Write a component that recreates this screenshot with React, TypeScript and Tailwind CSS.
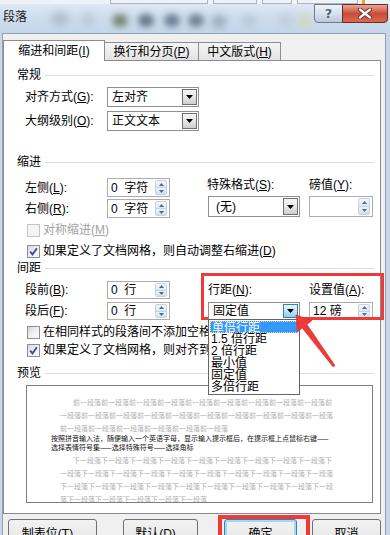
import clsx from 'clsx'
import type { ReactNode } from 'react'

const UI_FONT = "font-['Liberation_Sans','Noto_Sans_CJK_SC',sans-serif]"

// preview paragraph lines (gray = neighbouring paragraphs)
const PREV = ['前一段落'.repeat(9) + '前', '一段落前'.repeat(9) + '一段落', '前一段落'.repeat(6)]
const NEXT = ['下一段落'.repeat(9) + '下', '一段落下'.repeat(9) + '一段落', '下一段落'.repeat(9) + '下一段', '落' + '下一段落'.repeat(5)]

const LINE_OPTIONS = ['单倍行距', '1.5 倍行距', '2 倍行距', '最小值', '固定值', '多倍行距']

function Mn({ k }: { k: string }) {
  return (
    <>
      (<span className="underline underline-offset-1">{k}</span>)
    </>
  )
}

function Section({ title, className }: { title: string; className?: string }) {
  return (
    <div className={clsx('flex h-[16px] items-center pl-[13px] pr-[6px]', className)}>
      <span className="leading-[16px]">{title}</span>
      <div className="ml-[4px] h-px flex-1 bg-[#d5dfe5]" />
    </div>
  )
}

function SpinBox({ value, className }: { value: string; className: string }) {
  return (
    <div className={clsx('flex border border-[#abadb3] bg-white', className)}>
      <span className="flex-1 self-center whitespace-pre pl-[3px] leading-[12px]">{value}</span>
      <div className="my-px mr-[2px] flex w-[12px] flex-col">
        <div className="flex flex-1 items-center justify-center rounded-t-[2px] border border-[#c5d2df] bg-gradient-to-b from-[#f5f8fb] to-[#dde7f1]">
          <svg width="5" height="3" viewBox="0 0 5 3">
            <path d="M0 3L2.5 0L5 3Z" fill="#4f6a8f" />
          </svg>
        </div>
        <div className="-mt-px flex flex-1 items-center justify-center rounded-b-[2px] border border-[#c5d2df] bg-gradient-to-b from-[#eef3f8] to-[#d4e0ec]">
          <svg width="5" height="3" viewBox="0 0 5 3">
            <path d="M0 0L2.5 3L5 0Z" fill="#4f6a8f" />
          </svg>
        </div>
      </div>
    </div>
  )
}

function Combo({
  value,
  className,
  hot,
  pad = 'pl-[3px]',
  children,
}: {
  value: string
  className: string
  hot?: boolean
  pad?: string
  children?: ReactNode
}) {
  return (
    <div className={clsx('relative flex border border-[#8e8f8f] bg-white p-px', className)}>
      <span className={clsx('flex-1 self-center leading-[12px]', pad)}>{value}</span>
      <div
        className={clsx(
          'flex w-[15px] items-center justify-center border',
          hot
            ? 'border-[#3c7fb1] bg-gradient-to-b from-[#eaf6fd] via-[#bee6fd] to-[#8fcbf0]'
            : 'border-[#707070] bg-gradient-to-b from-[#f4f4f4] via-[#e8e8e8] to-[#cdcdcd]',
        )}
      >
        <svg width="7" height="4" viewBox="0 0 7 4">
          <path d="M0 0H7L3.5 4Z" fill="#000" />
        </svg>
      </div>
      {children}
    </div>
  )
}

function Check({
  checked,
  disabled,
  children,
  className,
}: {
  checked?: boolean
  disabled?: boolean
  children: ReactNode
  className?: string
}) {
  return (
    <div className={clsx('flex h-[14px] items-center pl-[23px]', className)}>
      <div
        className={clsx(
          'flex h-[13px] w-[13px] shrink-0 items-center justify-center border',
          disabled
            ? 'border-[#c5c5c5] bg-[#f4f4f4]'
            : 'border-[#8e8f8f] bg-gradient-to-br from-[#d6d6d6] via-[#f0f0f0] to-[#fbfbfb]',
        )}
      >
        {checked && (
          <svg width="9" height="9" viewBox="0 0 9 9">
            <path d="M1.2 4.6L3.5 7.4L7.9 1.2" stroke="#3550a0" strokeWidth="1.9" fill="none" />
          </svg>
        )}
      </div>
      <span className={clsx('ml-[3px] whitespace-nowrap leading-[14px]', disabled && 'text-[#a3a3a3]')}>
        {children}
      </span>
    </div>
  )
}

function Btn({ label, className }: { label: ReactNode; className: string }) {
  return (
    <div
      className={clsx(
        'flex h-[30px] justify-center rounded-[3px] border bg-gradient-to-b from-[#f2f2f2] via-[#ebebeb] to-[#d4d4d4] pt-[7px]',
        className,
      )}
    >
      <span className="leading-[14px]">{label}</span>
    </div>
  )
}

export default function App() {
  return (
    <div className={clsx('relative h-[535px] w-[390px] overflow-hidden bg-[#c6d7ea] text-[12px] text-black', UI_FONT)}>
      {/* ── title bar ─────────────────────────────────────────────────────── */}
      <div className="relative h-[33px] bg-gradient-to-b from-[#e3ecf6] via-[#cfdeee] to-[#c4d6ea]">
        {/* blurred window behind the glass */}
        <div className="pointer-events-none absolute inset-0 overflow-hidden">
          <div className="absolute left-[52px] top-[13px] h-[12px] w-[16px] rounded-full bg-[#a9b7c6] blur-[4px]" />
          <div className="absolute left-[82px] top-[15px] h-[10px] w-[12px] rounded-full bg-[#b3c0cd] blur-[4px]" />
          <div className="absolute left-[112px] top-[14px] h-[13px] w-[16px] rounded-full bg-[#7d8a78] blur-[3px]" />
          <div className="absolute left-[138px] top-[14px] h-[13px] w-[16px] rounded-full bg-[#6a7c90] blur-[3px]" />
          <div className="absolute left-[164px] top-[14px] h-[13px] w-[16px] rounded-full bg-[#6e8298] blur-[3px]" />
          <div className="absolute left-[188px] top-[14px] h-[13px] w-[16px] rounded-full bg-[#72859a] blur-[3px]" />
          <div className="absolute left-[212px] top-[16px] h-[11px] w-[14px] rounded-full bg-[#8ea2b8] blur-[4px]" />
          <div className="absolute left-[242px] top-[16px] h-[10px] w-[14px] rounded-full bg-[#b4c3d3] blur-[4px]" />
          <div className="absolute left-[278px] top-[15px] h-[10px] w-[16px] rounded-full bg-[#bccada] blur-[4px]" />
          <div className="absolute left-[300px] top-[15px] h-[12px] w-[10px] rounded-full bg-[#d8d3a8] blur-[4px]" />
        </div>

        <div className="relative flex h-[4px] bg-[#eef3f9]">
          <div className="ml-[110px] w-[98px] border-x border-b border-[#aab4c0]" />
          <div className="ml-[5px] w-[44px] border-x border-b border-[#aab4c0]" />
          <div className="ml-[5px] w-[30px] border-x border-b border-[#aab4c0]" />
          <div className="ml-[5px] w-[61px] border-x border-b border-[#aab4c0]" />
          <div className="ml-[4px] w-[3px] bg-[#f0a030]" />
        </div>

        <div className="relative flex items-start justify-between">
          <span className="ml-[3px] mt-[6px] leading-[14px] text-[#1b1b1b]">段落</span>
          <div className="mr-[2px] flex">
            <div className="flex h-[19px] w-[29px] items-center justify-center rounded-bl-[4px] border border-[#6e7b8a] bg-gradient-to-b from-[#eef3f8] via-[#d6e1ec] to-[#b9cadc]">
              <span className="font-['DejaVu_Sans',sans-serif] text-[13px] font-bold leading-none text-[#55606d] [text-shadow:0_0_2px_#fff]">?</span>
            </div>
            <div className="-ml-px flex h-[19px] w-[46px] items-center justify-center rounded-br-[4px] border border-[#6a2b22] bg-gradient-to-b from-[#e9a898] via-[#c84c39] to-[#d9694f]">
              <svg width="14" height="11" viewBox="0 0 14 11">
                <path d="M2 1.5L12 9.5M12 1.5L2 9.5" stroke="#5a1e16" strokeWidth="4" strokeLinecap="round" />
                <path d="M2 1.5L12 9.5M12 1.5L2 9.5" stroke="#fff" strokeWidth="2.4" strokeLinecap="round" />
              </svg>
            </div>
          </div>
        </div>
      </div>

      {/* ── dialog body ───────────────────────────────────────────────────── */}
      <div className="ml-[2px] h-[520px] w-[384px] border-x border-t border-[#95a1ae] bg-[#f0f0f0] pt-[6px]">
        {/* tabs */}
        <div className="flex h-[20px] items-end">
          <div className="relative z-10 -mb-px flex h-[21px] w-[102px] items-center justify-center border-x border-t border-[#898c95] bg-white">
            <span className="leading-[14px]">
              缩进和间距<Mn k="I" />
            </span>
          </div>
          <div className="-ml-px flex h-[18px] w-[95px] items-center justify-center border-x border-t border-[#898c95] bg-gradient-to-b from-[#f6f6f6] to-[#e3e3e3]">
            <span className="leading-[14px]">
              换行和分页<Mn k="P" />
            </span>
          </div>
          <div className="-ml-px flex h-[18px] w-[83px] items-center justify-center border-x border-t border-[#898c95] bg-gradient-to-b from-[#f6f6f6] to-[#e3e3e3]">
            <span className="leading-[14px]">
              中文版式<Mn k="H" />
            </span>
          </div>
        </div>

        {/* tab panel */}
        <div className="h-[454px] w-[378px] border border-[#898c95] bg-white">
          <Section title="常规" className="mt-[6px]" />
          <div className="mt-[4px] flex h-[20px] items-center pl-[21px]">
            <span className="w-[82px] leading-[14px]">
              对齐方式<Mn k="G" />:
            </span>
            <Combo value="左对齐" className="h-[20px] w-[92px]" />
          </div>
          <div className="mt-[4px] flex h-[20px] items-center pl-[21px]">
            <span className="w-[82px] leading-[14px]">
              大纲级别<Mn k="O" />:
            </span>
            <Combo value="正文文本" className="h-[20px] w-[92px]" />
          </div>

          <Section title="缩进" className="mt-[23px]" />
          <div className="mt-[8px] flex pl-[21px]">
            <div className="w-[182px]">
              <div className="flex h-[19px] items-center">
                <span className="w-[82px] leading-[14px]">
                  左侧<Mn k="L" />:
                </span>
                <SpinBox value="0  字符" className="h-[19px] w-[63px]" />
              </div>
              <div className="mt-[2px] flex h-[19px] items-center">
                <span className="w-[82px] leading-[14px]">
                  右侧<Mn k="R" />:
                </span>
                <SpinBox value="0  字符" className="h-[19px] w-[63px]" />
              </div>
            </div>
            <div>
              <div className="flex h-[14px] items-center">
                <span className="w-[102px] leading-[14px]">
                  特殊格式<Mn k="S" />:
                </span>
                <span className="leading-[14px]">
                  磅值<Mn k="Y" />:
                </span>
              </div>
              <div className="mt-[4px] flex">
                <Combo value="(无)" pad="pl-[6px]" className="ml-px h-[21px] w-[92px]" />
                <SpinBox value="" className="ml-[9px] h-[21px] w-[64px]" />
              </div>
            </div>
          </div>

          <Check disabled className="mt-[5px]">
            对称缩进<Mn k="M" />
          </Check>
          <Check checked className="mt-[7px]">
            如果定义了文档网格，则自动调整右缩进<Mn k="D" />
          </Check>

          <Section title="间距" className="mt-[2px]" />
          <div className="mt-[5px] flex pl-[21px]">
            <div className="w-[182px]">
              <div className="flex h-[18px] items-center">
                <span className="w-[82px] leading-[14px]">
                  段前<Mn k="B" />:
                </span>
                <SpinBox value="0  行" className="h-[18px] w-[63px]" />
              </div>
              <div className="mt-[3px] flex h-[18px] items-center">
                <span className="w-[82px] leading-[14px]">
                  段后<Mn k="F" />:
                </span>
                <SpinBox value="0  行" className="h-[18px] w-[63px]" />
              </div>
            </div>
            <div>
              <div className="flex h-[18px] items-center">
                <span className="ml-px w-[101px] leading-[14px]">
                  行距<Mn k="N" />:
                </span>
                <span className="leading-[14px]">
                  设置值<Mn k="A" />:
                </span>
              </div>
              <div className="mt-[3px] flex">
                <Combo value="固定值" hot className="relative z-20 ml-px h-[18px] w-[92px]">
                  {/* open list */}
                  <div className="absolute -left-px top-full w-[92px] border border-[#646464] bg-white p-px">
                    {LINE_OPTIONS.map((o, i) => (
                      <div
                        key={o}
                        className={clsx(
                          'h-[12px] whitespace-pre pl-px leading-[12px]',
                          i === 0 && 'border border-dotted border-[#f7d48a] bg-[#3399ff] text-white',
                        )}
                      >
                        {o}
                      </div>
                    ))}
                  </div>
                </Combo>
                <SpinBox value="12 磅" className="ml-[9px] h-[18px] w-[64px]" />
              </div>
            </div>
          </div>

          <Check className="mt-[5px]">
            在相同样式的段落间不添加空格<Mn k="C" />
          </Check>
          <Check checked className="mt-[4px]">
            如果定义了文档网格，则对齐到网格<Mn k="W" />
          </Check>

          <Section title="预览" className="mt-[8px]" />
          <div className="ml-[22px] mt-[4px] h-[118px] w-[347px] overflow-hidden border border-[#7f7f7f] bg-white pt-[10px] font-['Noto_Sans_CJK_SC',sans-serif] text-[7px]">
            <div className="whitespace-nowrap pl-[46px] leading-[13px] text-[#b0b0b0]">{PREV[0]}</div>
            <div className="whitespace-nowrap pl-[33px] leading-[13px] text-[#b0b0b0]">{PREV[1]}</div>
            <div className="whitespace-nowrap pl-[33px] leading-[13px] text-[#b0b0b0]">{PREV[2]}</div>
            <div className="-mt-px whitespace-nowrap pl-[24px] leading-[9px] text-[#111]">
              按照拼音输入法，随便输入一个英语字母，显示输入提示框后，在提示框上点鼠标右键——
            </div>
            <div className="whitespace-nowrap pl-[24px] leading-[9px] text-[#111]">选择表情符号集——选择特殊符号——选择角标</div>
            <div className="mt-[2px] whitespace-nowrap pl-[46px] leading-[13px] text-[#b0b0b0]">{NEXT[0]}</div>
            <div className="whitespace-nowrap pl-[33px] leading-[13px] text-[#b0b0b0]">{NEXT[1]}</div>
            <div className="whitespace-nowrap pl-[33px] leading-[13px] text-[#b0b0b0]">{NEXT[2]}</div>
            <div className="whitespace-nowrap pl-[33px] leading-[13px] text-[#b0b0b0]">{NEXT[3]}</div>
          </div>
        </div>

        {/* dialog buttons */}
        <div className="mt-[5px] flex">
          <Btn
            className="ml-[5px] w-[89px] border-[#707070]"
            label={
              <>
                制表位<Mn k="T" />...
              </>
            }
          />
          <Btn
            className="ml-[26px] w-[75px] border-[#707070]"
            label={
              <>
                默认<Mn k="D" />...
              </>
            }
          />
          <div className="relative ml-[26px]">
            <Btn className="w-[73px] border-[#3c7fb1] shadow-[inset_0_0_0_2px_#9fd9f8]" label="确定" />
            <div className="pointer-events-none absolute -left-[6px] -top-[4px] h-[36px] w-[92px] border-[4px] border-[#ef3a3a]" />
          </div>
          <Btn className="ml-[15px] w-[69px] border-[#707070]" label="取消" />
        </div>
      </div>

      {/* ── annotations ───────────────────────────────────────────────────── */}
      <div className="pointer-events-none absolute left-[201px] top-[273px] h-[47px] w-[183px] border-[3px] border-[#ef3a3a]" />
      <svg className="pointer-events-none absolute left-0 top-0 z-30" width="390" height="535" viewBox="0 0 390 535">
        <path
          d="M296 315 L312 320.5 L307 324.5 L335 365.5 L333 366.8 L302.2 328 L297.4 332 Z"
          fill="#ef3a3a"
          stroke="#d42a2a"
          strokeWidth="0.6"
        />
      </svg>
    </div>
  )
}
